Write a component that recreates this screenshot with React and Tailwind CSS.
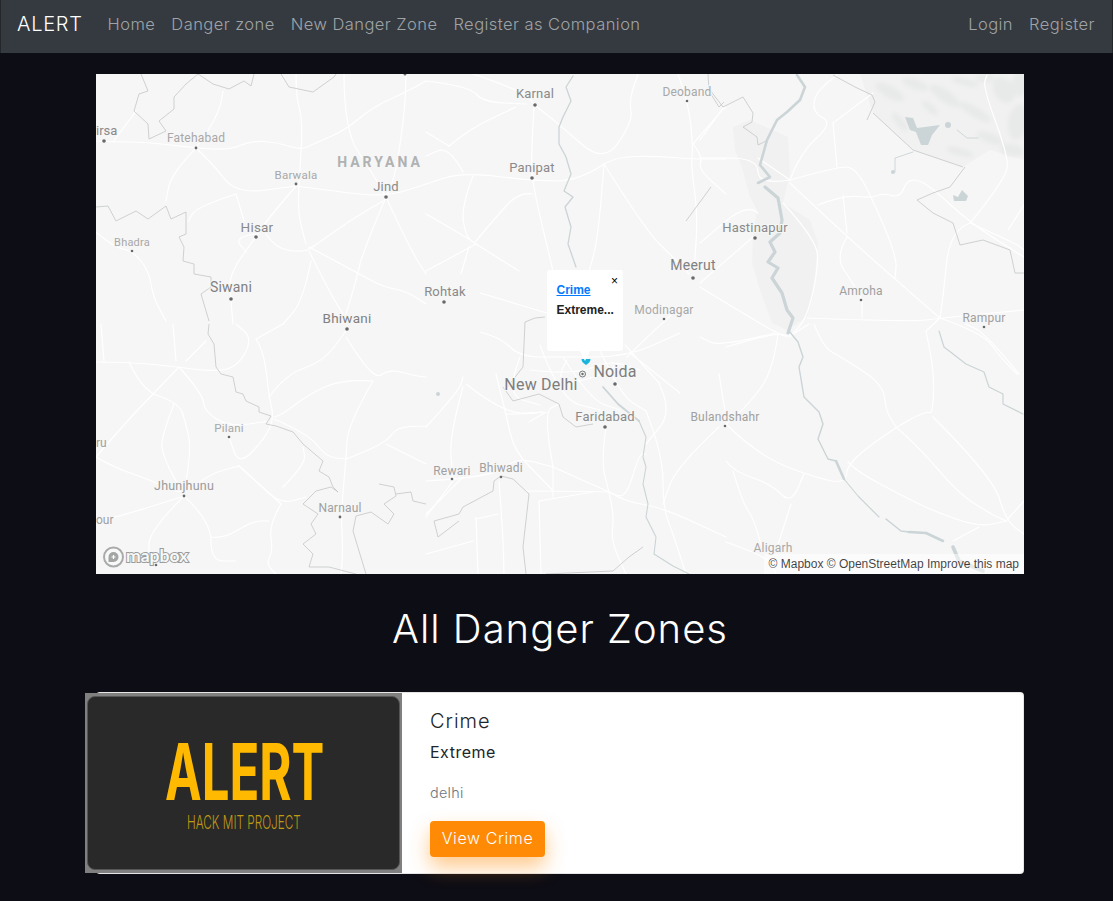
const roads = [
  "96,141 113,142 146,142 196,148 229,150 251,141 276,142 301,150 313,144 344,131 373,107 406,92 426,81",
  "196,148 213,164 236,194 296,186", "236,194 196,207 188,222", "236,194 244,221",
  "296,74 296,97 303,121 299,184 298,214 306,244", "296,186 266,221 256,237 229,274 231,301 233,324",
  "256,234 234,237 246,252", "266,234 276,249 303,252 313,247 349,221 383,201",
  "296,186 333,191 386,197 426,184", "344,74 344,131 373,174 386,197", "406,74 406,101 396,174 386,197",
  "386,197 363,251 356,281 346,314", "386,197 409,247 426,274", "309,247 356,272 383,287 406,291 426,304",
  "309,251 329,291 343,314", "311,261 303,301 283,324", "96,232 113,247 133,251 149,271 153,297 166,321",
  "136,111 113,142", "223,91 221,111 196,148", "196,148 171,174 166,201",
  "96,362 129,362 179,367 206,371 236,369 253,339 236,324", "256,339 283,324",
  "256,339 264,351 269,397 274,417 266,437 239,466 229,437", "269,397 286,374 323,362 346,331",
  "346,337 373,381 389,369 416,376 426,377", "373,381 343,379 309,394 283,414 274,417",
  "373,381 348,424 346,459 341,514 343,551 341,574", "274,419 309,434 326,457 346,459",
  "346,459 386,444 396,427 426,426", "386,444 426,464", "179,367 153,394 129,419 96,457",
  "153,394 179,402 186,424 191,447 184,496", "174,404 161,437 163,457 184,496", "129,362 138,381 153,394",
  "179,367 203,394 204,411 229,427 269,421", "96,457 113,467 153,481 184,496 209,474 239,466",
  "239,466 259,484 281,504 306,497", "239,466 281,504", "283,487 306,464 303,447",
  "184,496 149,531 149,557", "184,496 211,521 211,561 236,561", "184,496 129,514 96,521",
  "281,504 269,524 273,551 266,564 276,574", "211,537 223,539 253,521 269,521", "101,324 104,361",
  "173,324 176,361", "206,341 186,361",
  "473,74 523,91 536,106", "426,81 469,86 483,102 526,104", "534,107 531,157 533,187 553,271",
  "536,106 559,124 604,164 633,121 629,101 638,74", "604,164 616,157 653,156 693,159 726,159",
  "604,164 579,181 533,181 463,172 426,184", "604,164 601,204 596,247 589,271", "604,164 646,231 673,257 689,274",
  "463,172 449,146 426,156", "449,146 469,129 516,107", "449,146 426,132", "473,176 461,207 466,237 476,244",
  "533,194 519,192 496,217 476,241", "426,214 466,237 476,244", "476,244 426,271", "476,244 519,271", "469,247 461,274",
  "678,74 688,101 693,144 691,167 698,214 694,271", "693,144 723,109 726,107", "693,144 703,157 698,169 726,194",
  "496,374 506,414 514,451 544,481 553,491", "553,467 543,412 559,404", "553,467 609,492 626,499 639,454 646,454",
  "426,481 496,477 516,457 553,467", "426,427 459,391 463,377", "426,514 463,477", "453,481 426,517",
  "463,387 449,437 453,477", "466,384 504,414 543,412", "506,414 529,414 543,412", "529,422 546,412",
  "606,427 601,461 609,492 614,517 611,541 626,574", "553,467 553,497", "526,491 566,491 609,492",
  "539,501 541,574", "539,501 593,492", "609,492 626,502 661,507 726,537", "646,411 663,454 663,507 673,534 686,574",
  "659,384 673,411 646,444", "719,427 676,467 663,504", "719,374 726,417", "499,481 503,534 504,574",
  "476,517 478,574", "426,554 473,541", "476,519 498,514",
  "480,293 547,313", "480,332 500,337 520,357 563,357 627,357 680,333", "627,357 647,337 680,307",
  "630,353 680,393", "567,360 557,377 570,383 597,377 620,363", "540,345 560,400 600,410", "520,357 505,395 540,405",
  "563,357 590,400 620,410", "600,350 620,395 646,411", "625,345 660,384", "530,370 575,375 610,360 640,370",
  "726,347 776,332 789,337 809,324", "778,334 773,371 749,404 726,424",
  "726,424 759,457 826,481 846,482 848,462 896,427 926,411 933,414 934,371 926,331",
  "814,324 823,347 841,357 883,384 886,411 896,427", "896,427 918,446 959,494 991,514 1006,521",
  "933,417 993,477 1006,521 1024,534", "1006,521 1024,501", "848,462 856,471 899,494 933,511 979,527 1006,521",
  "953,541 979,527", "726,461 733,471 771,484 791,504 804,474", "791,504 776,551", "733,471 743,504 753,517 763,551",
  "726,542 769,557 776,574", "1019,374 986,334 966,324",
  "790,180 837,167 855,167 872,198 897,257 895,278", "790,180 758,185 758,158 700,158", "758,158 790,180",
  "790,180 800,153 833,123 813,113 815,93 837,75", "833,123 837,167", "833,123 873,93",
  "790,183 847,237 927,307 940,318", "847,237 835,257 853,283 862,300", "843,195 847,233", "818,205 843,195 872,198 883,193 900,198 908,178 927,183 970,223 1024,257",
  "970,223 950,230 943,297 940,318", "970,223 1008,177 1007,153 983,87 987,75", "1008,230 1024,205", "970,223 1015,243 1024,250",
  "783,203 817,240 818,270 807,318 790,337", "807,318 913,322 940,318 1024,310", "927,330 940,318",
  "940,318 983,333 1000,357 1017,374", "700,287 775,333 788,337", "775,333 720,347 700,337", "723,108 700,140",
  "758,213 747,203 700,243", "753,237 700,283", "862,300 862,318",
];

const borders = [
  "209,324 208,334 214,344 216,367 221,374 233,377 236,392 243,394 246,401 259,407 259,412 271,416 266,424 276,426 293,432 303,444 323,461 319,471 329,477 333,487 338,492 331,487 316,491 303,504 318,514 311,524 316,534 303,544 313,554 309,567 329,567 356,574",
  "379,484 394,487 396,496 384,504 394,514 388,524 371,512 356,516 353,531 359,551 366,574",
  "396,494 411,492 413,501 426,504",
  "198,74 186,84 174,97 174,109 159,121 166,131 149,139 148,124 134,111 139,94 148,91 141,74",
  "198,74 213,84 229,89 244,81 251,86 254,74", "281,74 289,87 313,92 334,77 336,74",
  "96,207 108,206 116,221 136,211 148,219 166,206 171,219 186,212 186,234 179,237 184,247 183,261 194,264 194,274 211,277 211,287 201,294 209,321",
  "503,387 513,401 539,394 559,404 563,417 576,427 593,424", "501,476 513,479 529,494 523,547 526,574",
  "501,476 494,481 493,491 463,507 459,514 434,521 438,537 459,521", "546,574 613,571 629,557 643,547",
  "873,113 913,150 963,167", "833,75 855,87 872,95 875,102 867,120",
  "917,200 933,213 953,223 960,245 983,240 1010,250 1015,273 1024,273", "917,200 933,193 950,187 965,167",
  "710,90 723,107 743,97 753,113 752,122 743,127 757,137 758,145 768,140", "708,74 709,91 719,107 724,102",
  "525,322 535,318 545,317", "525,322 523,367 505,390", "711,187 686,221",
];

const rivers = [
  ["797,75 805,87 800,100 787,112 777,120 767,140 760,165 770,177 758,183", 2.6],
  ["765,187 778,198 782,220 780,233 770,242 775,252 768,262 778,268 772,278 782,293 787,310 793,318 788,333", 3.2],
  ["789,331 798,342 803,357 799,367 804,397 819,412 823,424 818,439 828,459 836,461", 1.4],
  ["836,461 844,479", 2.6],
  ["844,479 858,496 871,509 879,517", 1.1],
  ["886,519 901,531 909,532", 1.6],
  ["909,532 926,533 943,541", 2.6],
  ["953,547 959,561 983,571", 3.6],
  ["573,76 566,87 571,101 563,117 559,127 559,144 566,157 571,174 564,191 573,197 565,207 571,227 568,244 576,267", 1.3],
  ["603,387 618,404 639,421", 1.8],
  ["639,421 646,437 643,457 646,467 643,484 648,504 646,517 656,537 654,554 673,566 689,574", 1.1],
  ["939,331 944,347 966,364 984,372 989,387 1003,394 1003,404 1023,414", 1.2],
  ["895,172 895,158 913,152", 0.9],
  ["957,130 967,138 978,138", 0.9],
];

const hills = [
  [890, 92, 16, 6, 30], [915, 84, 14, 5, 20], [945, 96, 18, 6, 35], [975, 112, 18, 5, 30], [930, 108, 10, 4, 40],
  [1004, 90, 14, 10, 60], [1018, 122, 10, 18, 10], [990, 138, 14, 5, 20], [1012, 150, 12, 6, 10], [965, 82, 14, 4, 15],
  [900, 122, 12, 4, 50], [960, 152, 14, 4, 15], [985, 78, 10, 4, 0], [1020, 84, 8, 12, 0],
];

const labels = [
  ["Karnal", 535, 98, 13, "#8a8a8a"], ["Deoband", 687, 96, 12, "#a8a8a8"], ["Panipat", 532, 172, 13, "#8a8a8a"],
  ["Fatehabad", 196, 142, 12, "#a8a8a8"], ["Barwala", 296, 179, 11.5, "#a8a8a8"], ["Jind", 386, 191, 13, "#8a8a8a"],
  ["Hastinapur", 755, 232, 13, "#8a8a8a"], ["Bhadra", 132, 246, 11, "#a8a8a8"], ["Hisar", 257, 232, 13.5, "#8a8a8a"],
  ["Siwani", 231, 292, 14, "#808080"], ["Meerut", 693, 270, 14, "#808080"], ["Rohtak", 445, 296, 13, "#8a8a8a"],
  ["Bhiwani", 347, 323, 13.5, "#808080"], ["Amroha", 861, 295, 12, "#a0a0a0"], ["Modinagar", 664, 314, 12, "#a8a8a8"],
  ["Rampur", 984, 322, 12, "#a0a0a0"], ["Noida", 615, 377, 16, "#7d7d7d"], ["New Delhi", 541, 390, 16, "#7d7d7d"],
  ["Faridabad", 605, 421, 13, "#8a8a8a"], ["Bulandshahr", 725, 421, 12, "#a0a0a0"], ["Pilani", 229, 432, 11.5, "#a8a8a8"],
  ["Rewari", 452, 475, 12, "#a0a0a0"], ["Bhiwadi", 501, 472, 12, "#a0a0a0"], ["Jhunjhunu", 184, 490, 12.5, "#9a9a9a"],
  ["Narnaul", 340, 512, 12, "#a0a0a0"], ["Aligarh", 773, 552, 12, "#a8a8a8"],
];

const dots = [
  [535, 105, 1.8], [687, 101, 1.3], [532, 178, 1.8], [196, 148, 1.4], [296, 184, 1.4], [386, 197, 1.8], [256, 237, 1.8],
  [132, 251, 1.3], [231, 299, 1.8], [347, 329, 1.8], [444, 302, 1.8], [755, 238, 1.8], [693, 278, 1.8], [664, 319, 1.3],
  [861, 300, 1.3], [984, 327, 1.3], [104, 141, 1.8], [229, 437, 1.3], [184, 496, 1.4], [340, 517, 1.4], [452, 479, 1.3],
  [501, 477, 1.3], [605, 427, 1.8], [725, 426, 1.3], [615, 384, 1.8], [405, 74, 1.5], [156, 565, 1.3],
];

// rounds the corners of a road so it doesn't look like a ruler line
function curve(str) {
  const pts = str.split(" ").map((p) => p.split(",").map(Number));
  let d = `M${pts[0][0]} ${pts[0][1]}`;
  for (let i = 1; i < pts.length - 1; i++) {
    const mx = (pts[i][0] + pts[i + 1][0]) / 2;
    const my = (pts[i][1] + pts[i + 1][1]) / 2;
    d += `Q${pts[i][0]} ${pts[i][1]} ${mx} ${my}`;
  }
  const last = pts[pts.length - 1];
  return d + `L${last[0]} ${last[1]}`;
}

function MapDrawing() {
  return (
    <svg viewBox="96 74 928 500" className="block w-full h-full font-['Roboto',sans-serif]">
      <defs>
        <filter id="soft"><feGaussianBlur stdDeviation="2" /></filter>
      </defs>
      <rect x="96" y="74" width="928" height="500" fill="#f6f6f6" />
      <polygon points="860,74 873,113 913,150 963,167 990,150 1024,160 1024,74" fill="#f1f1f1" />
      <g fill="#e8e9e9" filter="url(#soft)">
        {hills.map(([x, y, rx, ry, a], i) => (
          <ellipse key={i} cx={x} cy={y} rx={rx} ry={ry} transform={`rotate(${a} ${x} ${y})`} />
        ))}
      </g>
      <polygon points="733,127 750,120 788,137 790,173 783,203 810,220 818,243 813,297 807,317 787,330 772,323 760,290 752,263 753,237 757,210 750,197 742,167 735,150" fill="#f1f1f1" />
      <g fill="none" stroke="#ffffff" strokeWidth="1.2" strokeLinejoin="round" strokeLinecap="round">
        {roads.map((p, i) => <path key={i} d={curve(p)} />)}
      </g>
      <g fill="none" stroke="#c4c6c6" strokeWidth="0.8" strokeLinejoin="round">
        {borders.map((p, i) => <polyline key={i} points={p} />)}
      </g>
      <g fill="none" stroke="#cbd4d6" strokeLinejoin="round" strokeLinecap="round">
        {rivers.map(([p, w], i) => <polyline key={i} points={p} strokeWidth={w} />)}
      </g>
      <g fill="#cbd4d6">
        <polygon points="905,117 913,118 917,128 925,127 940,125 932,135 928,145 921,145 916,132 910,130" />
        <polygon points="953,195 958,197 962,190 968,196 966,201 954,201" />
        <circle cx="948" cy="125" r="3" />
        <circle cx="893" cy="172" r="2" />
        <circle cx="438" cy="394" r="2" />
      </g>
      {dots.map(([x, y, r], i) => <circle key={i} cx={x} cy={y} r={r} fill="#666a6a" />)}
      <circle cx="582.5" cy="374" r="3" fill="none" stroke="#666a6a" strokeWidth="0.9" />
      <circle cx="582.5" cy="374" r="1.2" fill="#666a6a" />
      <g textAnchor="middle" stroke="#f6f6f6" strokeWidth="2" paintOrder="stroke">
        {labels.map(([t, x, y, s, c]) => <text key={t} x={x} y={y} fontSize={s} fill={c} letterSpacing="0.2">{t}</text>)}
        <text x="380" y="167" fontSize="14" fontWeight="700" fill="#b0b2b2" letterSpacing="3">HARYANA</text>
      </g>
      <text x="96" y="135" fontSize="13" fill="#8a8a8a">irsa</text>
      <text x="96" y="447" fontSize="12" fill="#a0a0a0">ru</text>
      <text x="96" y="524" fontSize="12" fill="#a0a0a0">our</text>
      <path d="M586 365c-3-2-4.500-3.500-4.500-6l9 0c0 2.500-1.500 4-4.500 6z" fill="#19b5dc" />
      <circle cx="113.500" cy="557" r="9.500" fill="#f8f8f8" stroke="#a9abab" strokeWidth="2" />
      <path d="M113.500 552a5 5 0 0 1 0 10h-5v-5a5 5 0 0 1 5-5z" fill="#a3a5a5" />
      <path d="M113.500 555v4M111.500 557h4" stroke="#ffffff" strokeWidth="1.200" />
      <text x="126" y="562" fontSize="17.500" fontWeight="700" fill="#f8f8f8" stroke="#9a9c9c" strokeWidth="2" paintOrder="stroke" fontFamily="Lato, sans-serif">mapbox</text>
    </svg>
  );
}

function Popup() {
  return (
    <div className="absolute left-[451px] top-[196px] w-[76px] h-[81px] bg-white rounded-[3px] pl-[9.500px] pt-[10px] font-['Liberation_Sans',Arial,sans-serif] text-[12px] font-bold leading-[20px]">
      <span className="absolute right-[5px] top-[3px] text-[12px] leading-[16px] font-normal text-black">×</span>
      <a href="#" className="block text-[#007bff] underline">Crime</a>
      <p className="text-[#222222]">Extreme...</p>
      <span className="absolute left-[33px] -bottom-[10px] border-x-[5px] border-t-[10px] border-x-transparent border-t-white" />
    </div>
  );
}

function LogoImage() {
  return (
    <div className="-ml-[12px] w-[317px] h-[180px] shrink-0 bg-[#808080] px-[2px] py-[3px]">
      <div className="w-full h-full bg-[#292929] rounded-[8px] border border-[#555555]">
        <svg viewBox="0 0 311 172" className="block w-full h-full font-['Inter',sans-serif]">
          <text transform="translate(77 103) scale(0.63 1)" fontSize="78" fontWeight="700" fill="#ffb900">ALERT</text>
          <text transform="translate(99 132) scale(0.62 1)" fontSize="19" fontWeight="300" fill="#c09a12">HACK MIT PROJECT</text>
        </svg>
      </div>
    </div>
  );
}

export default function App() {
  return (
    <div className="min-h-screen bg-[#0d0d15] font-['Inter',sans-serif]">
      <nav className="h-[53px] bg-[#343a40] border-x border-[#23272b] flex items-center pl-4 pr-[17px] pb-[5px] text-[16.500px] font-light tracking-[0.45px] text-[#a0a3a6]">
        <a href="#" className="text-[20px] tracking-[0.7px] text-white mr-[25px]">ALERT</a>
        <div className="flex gap-4">
          <a href="#">Home</a>
          <a href="#">Danger zone</a>
          <a href="#">New Danger Zone</a>
          <a href="#">Register as Companion</a>
        </div>
        <div className="flex gap-4 ml-auto">
          <a href="#">Login</a>
          <a href="#">Register</a>
        </div>
      </nav>

      <main className="w-[928px] ml-24">
        <div className="relative h-[500px] mt-[21px] overflow-hidden">
          <MapDrawing />
          <Popup />
          <div className="absolute right-0 bottom-0 h-[20px] px-[5px] bg-white/50 font-['Liberation_Sans',Arial,sans-serif] text-[12px] leading-[20px] text-black/75">
            © Mapbox © OpenStreetMap Improve this map
          </div>
        </div>

        <h1 className="mt-[31px] text-center text-[40px] leading-[48px] font-light tracking-[1px] text-white">All Danger Zones</h1>

        <div className="mt-[39px] h-[182px] flex bg-white rounded-[4px] border border-black/10">
          <LogoImage />
          <div className="pl-[28px] pt-[16px]">
            <h5 className="text-[20px] leading-[24px] font-light tracking-[1px] text-[#212529]">Crime</h5>
            <p className="mt-[7px] text-[16px] leading-[24px] font-normal tracking-[0.5px] text-[#212529]">Extreme</p>
            <p className="mt-[18px] text-[14.400px] leading-[22px] font-light tracking-[0.3px] text-[#6c757d]">delhi</p>
            <a href="#" className="mt-[17px] pb-[2px] flex items-center justify-center w-[115px] h-[36px] rounded-[4px] bg-[#ff8a05] text-white text-[16px] font-light tracking-[0.6px] shadow-[0_10px_20px_rgba(255,138,5,0.45)]">View Crime</a>
          </div>
        </div>
      </main>
    </div>
  );
}
